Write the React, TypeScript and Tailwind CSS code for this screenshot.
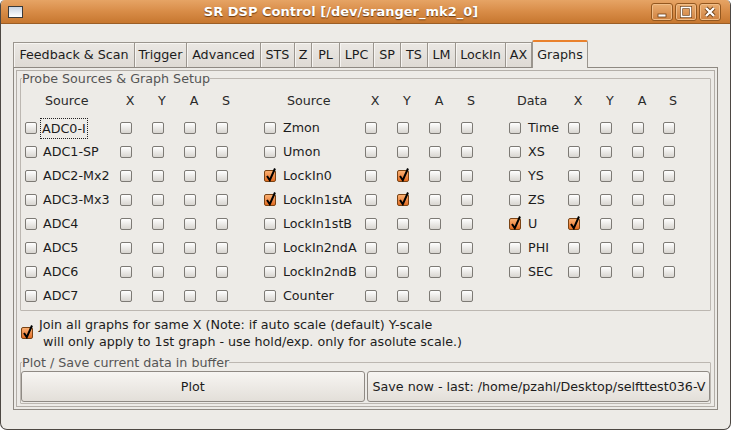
import clsx from "clsx";

type Item = { name: string; on?: boolean; sel?: number[]; focus?: boolean };

const groups: { head: string; rows: (Item | null)[] }[] = [
  {
    head: "Source",
    rows: [
      { name: "ADC0-I", focus: true },
      { name: "ADC1-SP" },
      { name: "ADC2-Mx2" },
      { name: "ADC3-Mx3" },
      { name: "ADC4" },
      { name: "ADC5" },
      { name: "ADC6" },
      { name: "ADC7" },
    ],
  },
  {
    head: "Source",
    rows: [
      { name: "Zmon" },
      { name: "Umon" },
      { name: "LockIn0", on: true, sel: [1] },
      { name: "LockIn1stA", on: true, sel: [1] },
      { name: "LockIn1stB" },
      { name: "LockIn2ndA" },
      { name: "LockIn2ndB" },
      { name: "Counter" },
    ],
  },
  {
    head: "Data",
    rows: [
      { name: "Time" },
      { name: "XS" },
      { name: "YS" },
      { name: "ZS" },
      { name: "U", on: true, sel: [0] },
      { name: "PHI" },
      { name: "SEC" },
      null,
    ],
  },
];

const headPad = ["pl-[20px]", "pl-[23px]", "pl-[8px]"];

const tabs = [
  { label: "Feedback & Scan", w: "w-[122px]" },
  { label: "Trigger", w: "w-[52px]" },
  { label: "Advanced", w: "w-[74px]" },
  { label: "STS", w: "w-[34px]" },
  { label: "Z", w: "w-[17px]" },
  { label: "PL", w: "w-[28px]" },
  { label: "LPC", w: "w-[34px]" },
  { label: "SP", w: "w-[27px]" },
  { label: "TS", w: "w-[27px]" },
  { label: "LM", w: "w-[28px]" },
  { label: "LockIn", w: "w-[50px]" },
  { label: "AX", w: "w-[26px]" },
];

const cols =
  "grid grid-cols-[17px_78px_32px_32px_32px_48px_18px_83px_32px_32px_32px_48px_18px_41px_32px_32px_31px_32px]";

function Check({ on }: { on?: boolean }) {
  return (
    <span
      className={clsx(
        "relative block w-[12px] h-[12px] rounded-[2px] border",
        on
          ? "border-[#7a4314] bg-linear-to-b from-[#fbb071] to-[#e26c1f]"
          : "border-[#7d7a75] bg-linear-to-b from-white to-[#d8d5d0]"
      )}
    >
      {on && (
        <svg
          className="absolute left-[0px] top-[-4px]"
          width="12"
          height="15"
          viewBox="0 0 12 15"
        >
          <path d="M2 9 L4.8 13.2 L10 1.5" stroke="#000" strokeWidth="2" fill="none" />
        </svg>
      )}
    </span>
  );
}

function TitleButton({ kind }: { kind: "min" | "max" | "close" }) {
  return (
    <div className="w-[22px] h-[18px] rounded-[3px] border border-[#93571f] bg-linear-to-b from-[#eaad70] to-[#cf8240] shadow-[inset_0_0_0_1px_#f0bd88] flex items-center justify-center">
      <svg width="12" height="12" viewBox="0 0 12 12">
        {kind === "min" && (
          <rect x="2" y="8" width="8" height="3" fill="#fff" stroke="#6d3e14" strokeWidth="0.8" />
        )}
        {kind === "max" && (
          <>
            <rect x="1.5" y="1.5" width="9" height="9" fill="none" stroke="#6d3e14" strokeWidth="3" />
            <rect x="1.5" y="1.5" width="9" height="9" fill="none" stroke="#fff" strokeWidth="1.6" />
          </>
        )}
        {kind === "close" && (
          <>
            <path d="M2 2 L10 10 M10 2 L2 10" stroke="#6d3e14" strokeWidth="4" />
            <path d="M2 2 L10 10 M10 2 L2 10" stroke="#fff" strokeWidth="2.4" />
          </>
        )}
      </svg>
    </div>
  );
}

export default function App() {
  return (
    <div className="w-[731px] h-[430px] bg-white font-['DejaVu_Sans',sans-serif] text-[12.7px] text-[#1c1c1c]">
      <div className="flex flex-col h-[430px] bg-[#edebe7] border-x border-b border-[#4d4843] rounded-t-[5px] rounded-b-[7px] overflow-hidden">
        {/* title bar */}
        <div className="h-[24px] flex items-center bg-linear-to-b from-[#e6a465] via-[#d88c47] to-[#c7772f] border-b border-[#9b5e26]">
          <div className="w-[30px] pl-[7px]">
            <div className="w-[15px] h-[12px] border border-[#3a3a3a] bg-linear-to-b from-[#c9d4e3] to-white" />
          </div>
          <div className="flex-1 text-center text-white font-bold text-[13px] [text-shadow:0_1px_1px_#6b3a10] leading-[24px]">
            SR DSP Control [/dev/sranger_mk2_0]
          </div>
          <div className="flex gap-[2px] pr-[9px]">
            <TitleButton kind="min" />
            <TitleButton kind="max" />
            <TitleButton kind="close" />
          </div>
        </div>

        <div className="flex flex-col pl-[12px] pt-[16px]">
          {/* tabs */}
          <div className="flex items-end h-[27px]">
            {tabs.map((t, i) => (
              <div
                key={t.label}
                className={clsx(
                  t.w,
                  "h-[25px] flex items-center justify-center border-t border-r border-[#9a958e] bg-linear-to-b from-[#ebe8e4] to-[#dedad4] shadow-[inset_1px_1px_0_#f7f5f2] whitespace-nowrap",
                  i === 0 && "border-l"
                )}
              >
                {t.label}
              </div>
            ))}
            <div className="relative z-10 w-[56px] h-[28px] -mb-px flex items-center justify-center border-x border-[#9a958e] border-t-2 border-t-[#e9812c] bg-[#edebe7] rounded-t-[2px] pb-[1px]">
              Graphs
            </div>
          </div>

          {/* notebook page */}
          <div className="w-[705px] border border-[#8e8982] p-[2px]">
            <div className="border border-[#b3aea8] px-[3px] pb-[2px]">
              <fieldset className="border border-[#bcb7b1] rounded-[1px] px-[4px] pb-[2px]">
                <legend className="-ml-[3px] leading-[15px] text-[#555]">Probe Sources &amp; Graph Setup</legend>
                <div className={clsx(cols, "h-[24px] items-center mt-[3px] text-[#2a2a2a]")}>
                  {groups.map((g, gi) => (
                    <div key={gi} className="contents">
                      <div className={clsx("col-span-2", headPad[gi])}>{g.head}</div>
                      {["X", "Y", "A", "S"].map((h) => (
                        <div key={h}>
                          <div className="w-[20px] text-center">{h}</div>
                        </div>
                      ))}
                    </div>
                  ))}
                </div>
                <div className={clsx(cols, "auto-rows-[24px] items-center mt-[3px]")}>
                  {[0, 1, 2, 3, 4, 5, 6, 7].map((r) =>
                    groups.map((g, gi) => {
                      const it = g.rows[r];
                      if (!it)
                        return (
                          <div key={`${r}-${gi}`} className="contents">
                            {[0, 1, 2, 3, 4, 5].map((c) => (
                              <div key={c} />
                            ))}
                          </div>
                        );
                      return (
                        <div key={`${r}-${gi}`} className="contents">
                          <Check on={it.on} />
                          <div className="whitespace-nowrap">
                            {it.focus ? (
                              <span className="inline-block -ml-[2px] px-[1px] py-[2px] border border-dotted border-[#222] leading-[15px]">
                                {it.name}
                              </span>
                            ) : (
                              <span className="pl-[1px]">{it.name}</span>
                            )}
                          </div>
                          {[0, 1, 2, 3].map((c) => (
                            <Check key={c} on={it.sel?.includes(c)} />
                          ))}
                        </div>
                      );
                    })
                  )}
                </div>
              </fieldset>

              <div className="flex items-center mt-[5px] pl-[1px]">
                <Check on />
                <div className="ml-[6px] leading-[17px] whitespace-pre">
                  {"Join all graphs for same X (Note: if auto scale (default) Y-scale\n will only apply to 1st graph - use hold/exp. only for asolute scale.)"}
                </div>
              </div>

              <fieldset className="mt-[5px] border border-[#bcb7b1] rounded-[1px] pb-[1px]">
                <legend className="ml-[1px] leading-[15px] text-[#555]">Plot / Save current data in buffer</legend>
                <div className="grid grid-cols-2 gap-[2px] pt-[1px]">
                  <button className="h-[31px] rounded-[3px] border border-[#8f8a84] bg-linear-to-b from-[#f7f5f2] to-[#e3dfd9] text-center">
                    Plot
                  </button>
                  <button className="h-[31px] rounded-[3px] border border-[#8f8a84] bg-linear-to-b from-[#f7f5f2] to-[#e3dfd9] text-left pl-[5px] overflow-hidden whitespace-nowrap">
                    Save now - last: /home/pzahl/Desktop/selfttest036-V
                  </button>
                </div>
              </fieldset>
            </div>
          </div>
        </div>
      </div>
    </div>
  );
}
